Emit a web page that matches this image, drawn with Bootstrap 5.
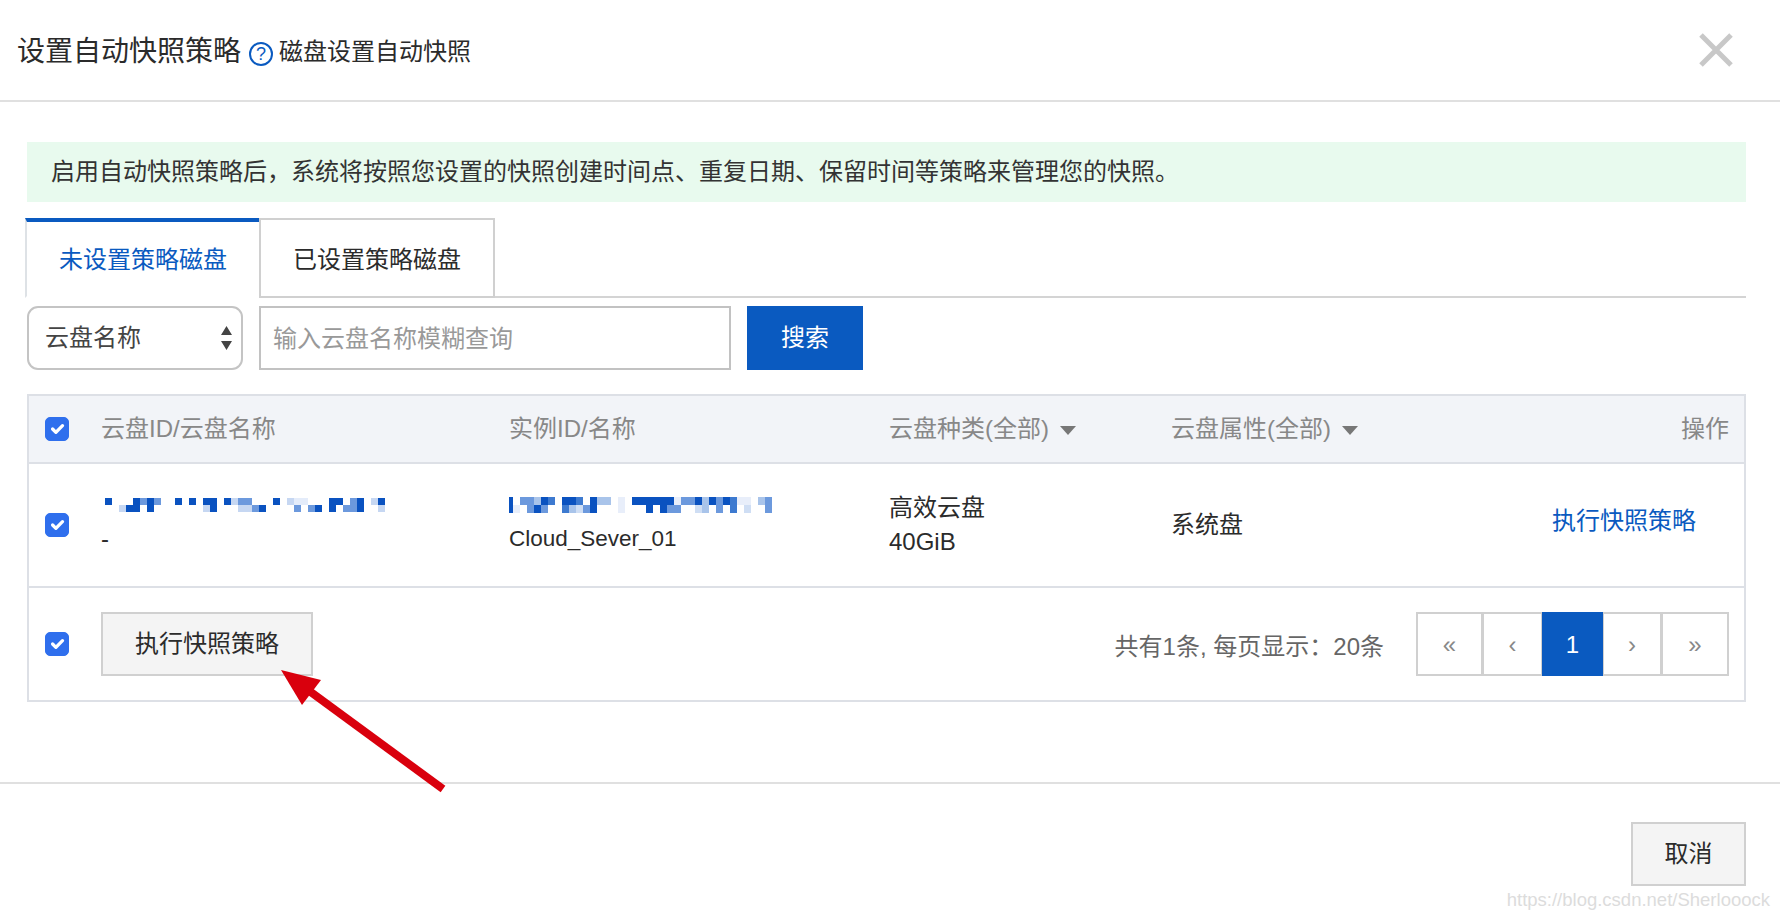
<!DOCTYPE html>
<html lang="zh-CN">
<head>
<meta charset="utf-8">
<title>设置自动快照策略</title>
<link href="https://cdn.jsdelivr.net/npm/bootstrap@5.3.0/dist/css/bootstrap.min.css" rel="stylesheet">
<style>
html,body{height:100%;}
body{font-family:"Liberation Sans","Noto Sans CJK SC",sans-serif;font-size:24px;color:#2b2b2b;background:#fff;overflow:hidden;}
.dlg{position:relative;width:1780px;height:918px;}
.dlg-head{height:102px;border-bottom:2px solid #e0e0e0;padding:0 46px 0 17px;}
.dlg-title{font-size:28px;font-weight:400;line-height:1;margin:0;color:#2b2b2b;padding-top:4px;}
.help-dot{width:24px;height:24px;border:2px solid #0a5ac0;border-radius:50%;color:#0a5ac0;font-size:18px;line-height:20px;text-align:center;margin:8px 6px 0 8px;}
.dlg-sub{font-size:24px;line-height:1;padding-top:4px;}
.x-btn{background:none;border:0;padding:0;line-height:0;}
.dlg-body{height:680px;padding:40px 34px 0 27px;}
.notice{height:60px;background:#e8faee;padding:0 24px;line-height:60px;color:#333;margin-bottom:16px;}
.tabs-x{height:80px;border-bottom:2px solid #d4d4d4;margin-left:-2px;}
.tabs-x .nav-link{height:80px;width:236px;padding:0;margin:0;border:2px solid #d0d0d0;border-bottom-color:#d0d0d0;border-radius:0;color:#2b2b2b;line-height:80px;text-align:center;font-size:24px;background:#fff;}
.tabs-x .nav-link.active{width:234px;color:#0a5ac0;border-top:4px solid #0a5ac0;border-right:0;border-bottom:2px solid #fff;line-height:76px;}
.search-row{margin-top:8px;height:64px;}
.pick{width:216px;height:64px;border:2px solid #c4c4c4;border-radius:11px;font-size:24px;color:#444;padding:0 30px 0 16px;background-image:url("data:image/svg+xml,%3Csvg xmlns='http://www.w3.org/2000/svg' width='12' height='24'%3E%3Cpath d='M6 0l6 9H0zM6 24L0 15h12z' fill='%23444'/%3E%3C/svg%3E");background-size:11px 24px;background-position:right 9px center;}
.query{width:472px;height:64px;border:2px solid #c2c2c2;border-radius:0;font-size:24px;padding:2px 12px 0;margin-left:16px;}
.query::placeholder{color:#999;}
.go{width:116px;height:64px;background:#0a5ac0;border:0;border-radius:0;color:#fff;font-size:24px;margin-left:16px;padding:0;}
.grid-box{margin-top:24px;width:1719px;border:2px solid #dde0e6;}
.grid-box .table{margin:0;table-layout:fixed;--bs-table-bg:transparent;--bs-table-color:#2b2b2b;}
.grid-box th,.grid-box td{border:0;padding:0;vertical-align:middle;font-weight:400;line-height:34px;}
.grid-box thead tr{height:67px;background:#f2f4f8;border-bottom:2px solid #dde0e6;}
.grid-box th{color:#888;}
.grid-box tbody tr{height:124px;border-bottom:2px solid #dde0e6;}
.grid-box tfoot td{height:113px;}
.c-check{width:72px;padding-left:16px !important;}
.c-a{width:408px;}.c-b{width:380px;}.c-c{width:282px;}
.grid-box .form-check-input{width:24px;height:24px;margin:0;border-radius:5px;background-color:#2f6fed;border-color:#2f6fed;display:block;}
.caret-x{display:inline-block;margin-left:11px;vertical-align:2px;}
.to-right{padding-right:15px !important;}
.inst-name{font-size:22.5px;}
.run-link{color:#0a5ac0;text-decoration:none;display:inline-block;padding-right:48px;padding-bottom:8px;}
.plain-btn{background:#f4f4f4;border:2px solid #d0d0d0;border-radius:0;color:#2b2b2b;font-size:24px;padding:0;}
.run-btn{width:212px;height:64px;margin-left:32px;}
.count{color:#666;margin-right:32px;padding-top:5px;}
.pager{margin:0 15px 0 0;height:64px;}
.pager .page-link{height:64px;width:59px;padding:0;border:2px solid #d0d0d0;border-radius:0 !important;margin-left:-2px;color:#888;text-align:center;line-height:62px;font-size:24px;background:#fff;}
.pager .page-item:first-child .page-link{width:67px;margin-left:0;}
.pager .page-item:nth-child(2) .page-link{width:61px;}
.pager .page-item:nth-child(4) .page-link{width:60px;}
.pager .page-item:last-child .page-link{width:68px;}
.pager .page-item.active .page-link{background:#0a5ac0;border-color:#0a5ac0;color:#fff;width:61px;position:relative;}
.dlg-foot{height:136px;border-top:2px solid #e0e0e0;padding:38px 34px 0 0;}
.cancel-btn{width:115px;height:64px;}
.mosaic{display:block;}
.mosaic path{shape-rendering:crispEdges;}
.arrow-over{position:absolute;left:270px;top:660px;pointer-events:none;}
.mark-url{position:absolute;right:10px;top:888px;font-size:18.5px;line-height:24px;color:#dcdcdc;font-family:"Liberation Sans",sans-serif;}
</style>
</head>
<body>
<div class="dlg">
  <div class="dlg-head d-flex align-items-center">
    <h1 class="dlg-title">设置自动快照策略</h1>
    <span class="help-dot">?</span>
    <span class="dlg-sub">磁盘设置自动快照</span>
    <button class="x-btn ms-auto" type="button" aria-label="关闭">
      <svg width="36" height="36" viewBox="0 0 36 36"><path d="M3 3L33 33M33 3L3 33" stroke="#c8c8c8" stroke-width="5" fill="none"/></svg>
    </button>
  </div>
  <div class="dlg-body">
    <div class="notice">启用自动快照策略后，系统将按照您设置的快照创建时间点、重复日期、保留时间等策略来管理您的快照。</div>
    <ul class="nav nav-tabs tabs-x">
      <li class="nav-item"><a class="nav-link active" href="#">未设置策略磁盘</a></li>
      <li class="nav-item"><a class="nav-link" href="#">已设置策略磁盘</a></li>
    </ul>
    <div class="search-row d-flex">
      <select class="form-select pick"><option>云盘名称</option></select>
      <input class="form-control query" type="text" placeholder="输入云盘名称模糊查询">
      <button class="btn go" type="button">搜索</button>
    </div>
    <div class="grid-box">
      <table class="table">
        <thead>
          <tr>
            <th class="c-check"><input class="form-check-input" type="checkbox" checked></th>
            <th class="c-a">云盘ID/云盘名称</th>
            <th class="c-b">实例ID/名称</th>
            <th class="c-c">云盘种类(全部)<svg class="caret-x" width="16" height="9" viewBox="0 0 16 9"><path d="M0 0h16L8 9z" fill="#777"/></svg></th>
            <th>云盘属性(全部)<svg class="caret-x" width="16" height="9" viewBox="0 0 16 9"><path d="M0 0h16L8 9z" fill="#777"/></svg></th>
            <th class="text-end to-right">操作</th>
          </tr>
        </thead>
        <tbody>
          <tr>
            <td class="c-check"><input class="form-check-input" type="checkbox" checked></td>
            <td>
              <svg class="mosaic" width="292" height="28" viewBox="0 0 285 28">
                <g transform="translate(0,4)">
                <path fill="#0a52c0" d="M0 0h7v7H0zM28 0h7v7h-7zM42 0h7v7h-7zM70 0h7v7h-7zM84 0h7v7h-7zM98 0h14v7H98zM119 0h7v7h-7zM168 0h7v7h-7zM224 0h14v7h-14zM252 0h7v7h-7zM273 0h7v7h-7zM21 7h14v7H21zM42 7h7v7h-7zM105 7h7v7h-7zM154 7h7v7h-7zM210 7h7v7h-7zM224 7h7v7h-7zM252 7h7v7h-7z"/>
                <path fill="#6c99dd" d="M35 0h7v7h-7zM49 0h7v7h-7zM133 0h14v7h-14zM245 0h7v7h-7zM189 7h7v7h-7zM203 7h7v7h-7zM238 7h7v7h-7zM245 7h7v7h-7zM147 7h7v7h-7z"/>
                <path fill="#c6d7f2" d="M126 0h7v7h-7zM182 0h7v7h-7zM266 0h7v7h-7zM14 7h7v7h-7zM98 7h7v7h-7zM133 7h14v7h-14zM273 7h7v7h-7z"/>
                <path fill="#e4ecfa" d="M189 0h14v7h-14z"/>
                </g>
              </svg>
              <div>-</div>
            </td>
            <td>
              <svg class="mosaic" width="270" height="28" viewBox="0 0 270 28">
                <g transform="translate(-3,3)">
                <path fill="#0a52c0" d="M0 0h7v8H0zM35 0h7v8h-7zM56 0h14v8H56zM84 0h7v8h-7zM126 0h42v8h-42zM189 0h7v8h-7zM203 0h7v8h-7zM217 0h7v8h-7zM0 8h7v8H0zM28 8h7v8h-7zM84 8h7v8h-7zM140 8h7v8h-7zM154 8h7v8h-7z"/>
                <path fill="#3d7ad0" d="M42 0h7v8h-7zM70 0h7v8h-7zM224 0h7v8h-7zM56 8h7v8h-7zM224 8h7v8h-7z"/>
                <path fill="#6c99dd" d="M14 0h14v8H14zM175 0h14v8h-14zM210 0h7v8h-7zM259 0h7v8h-7zM21 8h7v8h-7zM35 8h7v8h-7zM77 8h7v8h-7zM161 8h14v8h-14zM210 8h7v8h-7zM259 8h7v8h-7z"/>
                <path fill="#a9c4ea" d="M28 0h7v8h-7zM91 0h14v8H91zM196 0h7v8h-7zM252 0h7v8h-7zM63 8h7v8h-7zM196 8h7v8h-7z"/>
                <path fill="#cfdef4" d="M70 8h7v8h-7zM189 8h7v8h-7zM238 8h7v8h-7z"/>
                <path fill="#e8eefa" d="M231 0h14v8h-14zM168 0h7v8h-7zM7 8h7v8H7zM112 0h7v16h-7z"/>
                </g>
              </svg>
              <div class="inst-name">Cloud_Sever_01</div>
            </td>
            <td>高效云盘<br>40GiB</td>
            <td>系统盘</td>
            <td class="text-end"><a class="run-link" href="#">执行快照策略</a></td>
          </tr>
        </tbody>
        <tfoot>
          <tr>
            <td colspan="6">
              <div class="d-flex align-items-center">
                <input class="form-check-input ms-3 flex-shrink-0" type="checkbox" checked>
                <button class="btn plain-btn run-btn" type="button">执行快照策略</button>
                <span class="count ms-auto">共有1条, 每页显示：20条</span>
                <ul class="pagination pager">
                  <li class="page-item"><a class="page-link" href="#">«</a></li>
                  <li class="page-item"><a class="page-link" href="#">‹</a></li>
                  <li class="page-item active"><a class="page-link" href="#">1</a></li>
                  <li class="page-item"><a class="page-link" href="#">›</a></li>
                  <li class="page-item"><a class="page-link" href="#">»</a></li>
                </ul>
              </div>
            </td>
          </tr>
        </tfoot>
      </table>
    </div>
  </div>
  <div class="dlg-foot d-flex justify-content-end align-items-start">
    <button class="btn plain-btn cancel-btn" type="button">取消</button>
  </div>
  <svg class="arrow-over" width="180" height="135" viewBox="0 0 180 135">
    <path d="M11 10L51 20 32 45z" fill="#d9000d"/>
    <path d="M38 30L173 129" stroke="#d9000d" stroke-width="8" fill="none"/>
  </svg>
  <div class="mark-url">https://blog.csdn.net/Sherlooock</div>
</div>
</body>
</html>
